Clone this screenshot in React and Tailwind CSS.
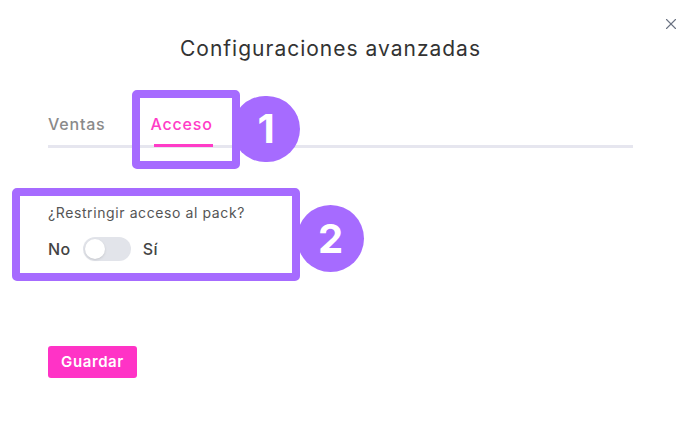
import React from "react";
import { X } from "lucide-react";

const Badge = ({ n, className }) => (
  <div
    className={`absolute flex items-center justify-center rounded-full bg-[#a66bff] text-white font-bold text-[40px] ${className}`}
    style={{ fontFamily: "Inter, sans-serif" }}
  >
    {n}
  </div>
);

const App = () => {
  return (
    <div
      className="relative w-[688px] h-[438px] bg-white overflow-hidden"
      style={{ fontFamily: "Inter, 'Open Sans', sans-serif" }}
    >
      <button className="absolute right-[8px] top-[15px] text-gray-500">
        <X className="w-[18px] h-[18px]" strokeWidth={1.5} />
      </button>

      <div className="pl-[48px] pr-[55px] pt-[35px]">
        <h1 className="text-center pr-[20px] text-[21px] leading-[28px] tracking-[1px] text-[#333] font-normal">
          Configuraciones avanzadas
        </h1>

        {/* Tabs */}
        <div className="mt-[51px] flex border-b-[3px] border-[#e6e6ef]">
          <div className="pb-[11px] text-[16px] leading-[20px] tracking-[0.8px] font-medium text-[#8a8a8a]">Ventas</div>
          <div className="ml-[45px] relative pb-[11px] text-[16px] leading-[20px] tracking-[0.8px] font-medium text-[#ff3cc7]">
            Acceso
            <div className="absolute left-[3px] right-0 bottom-[-2px] h-[3px] bg-[#ff3cc7]" />
          </div>
        </div>

        {/* Restringir */}
        <div className="mt-[56px]">
          <p className="text-[14px] leading-[18px] tracking-[0.6px] text-[#555]">¿Restringir acceso al pack?</p>
          <div className="mt-[15px] flex items-center">
            <span className="text-[16px] tracking-[0.5px] font-medium text-[#444]">No</span>
            <div className="ml-[12px] w-[48px] h-[24px] rounded-full bg-[#e2e4ea] p-[2px]">
              <div className="w-[20px] h-[20px] rounded-full bg-white shadow" />
            </div>
            <span className="ml-[12px] text-[16px] tracking-[0.5px] font-medium text-[#444]">Sí</span>
          </div>
        </div>

        <button className="mt-[85px] w-[89px] h-[32px] rounded-[3px] bg-[#ff33c6] text-white text-[15px] tracking-[0.6px] font-semibold">
          Guardar
        </button>
      </div>

      {/* Annotation overlays */}
      <Badge n="1" className="left-[232px] top-[96px] w-[68px] h-[66px]" />
      <div className="absolute left-[132px] top-[90px] w-[108px] h-[79px] border-[8px] border-[#a66bff] rounded-[5px]" />

      <Badge n="2" className="left-[297px] top-[205px] w-[67px] h-[67px]" />
      <div className="absolute left-[12px] top-[188px] w-[288px] h-[93px] border-[8px] border-[#a66bff] rounded-[5px]" />
    </div>
  );
};

export default App;
